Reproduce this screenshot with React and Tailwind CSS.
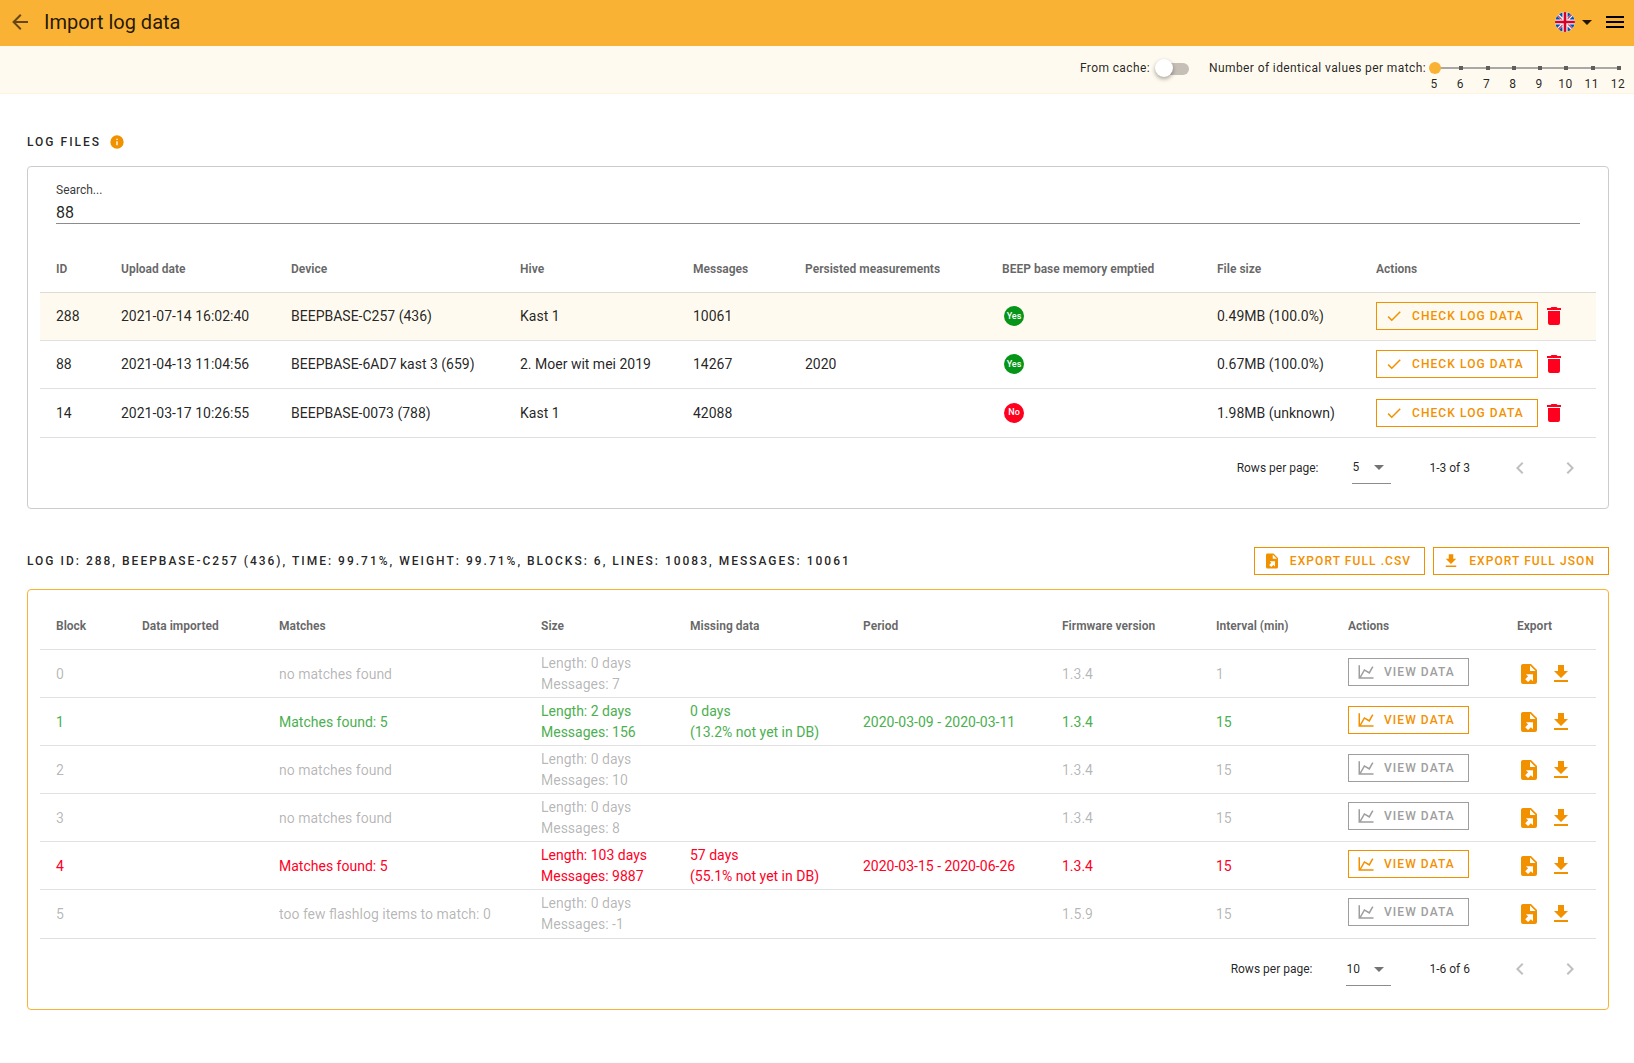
import { useState } from "react";

const icons = {
  back: "M20,11V13H8L13.5,18.5L12.08,19.92L4.16,12L12.08,4.08L13.5,5.5L8,11H20Z",
  menu: "M3,6H21V8H3V6M3,11H21V13H3V11M3,16H21V18H3V16Z",
  caret: "M7,10L12,15L17,10H7Z",
  info: "M13,9H11V7H13M13,17H11V11H13M12,2A10,10 0 0,0 2,12A10,10 0 0,0 12,22A10,10 0 0,0 22,12A10,10 0 0,0 12,2Z",
  check: "M21,7L9,19L3.5,13.5L4.91,12.09L9,16.17L19.59,5.59L21,7Z",
  trash: "M19,4H15.5L14.5,3H9.5L8.5,4H5V6H19M6,19A2,2 0 0,0 8,21H16A2,2 0 0,0 18,19V7H6V19Z",
  fileExport:
    "M6,2C4.89,2 4,2.9 4,4V20A2,2 0 0,0 6,22H18A2,2 0 0,0 20,20V8L14,2M13,3.5L18.5,9H13M8.93,12.22H16V19.29L13.88,17.17L11.05,20L8.22,17.17L11.05,14.35",
  download: "M5,20H19V18H5M19,9H15V3H9V9H5L12,16L19,9Z",
  chart: "M16,11.78L20.24,4.45L21.97,5.45L16.74,14.5L10.23,10.75L5.46,19H22V21H2V3H4V17.54L9.5,8L16,11.78Z",
  left: "M15.41,16.58L10.83,12L15.41,7.41L14,6L8,12L14,18L15.41,16.58Z",
  right: "M8.59,16.58L13.17,12L8.59,7.41L10,6L16,12L10,18L8.59,16.58Z",
};

const Icon = ({ name, className = "size-6" }) => (
  <svg viewBox="0 0 24 24" fill="currentColor" className={`shrink-0 ${className}`} aria-hidden="true">
    <path d={icons[name]} />
  </svg>
);

const Flag = () => (
  <svg viewBox="0 0 20 20" className="size-5" aria-hidden="true">
    <clipPath id="flag-circle">
      <circle cx="10" cy="10" r="10" />
    </clipPath>
    <g clipPath="url(#flag-circle)">
      <rect width="20" height="20" fill="#f0f0f0" />
      <path
        fill="#0052b4"
        d="M2.1 3.9A10 10 0 0 0 .4 7.4H5.6ZM19.6 7.4A10 10 0 0 0 17.9 3.9L14.4 7.4ZM.4 12.6A10 10 0 0 0 2.1 16.1L5.6 12.6ZM16.1 2.1A10 10 0 0 0 12.6.4V5.6ZM3.9 17.9A10 10 0 0 0 7.4 19.6V14.4ZM7.4.4A10 10 0 0 0 3.9 2.1L7.4 5.6ZM12.6 19.6A10 10 0 0 0 16.1 17.9L12.6 14.4ZM14.4 12.6L17.9 16.1A10 10 0 0 0 19.6 12.6Z"
      />
      <path
        fill="#d80027"
        d="M19.9 8.7H11.3V.1A10 10 0 0 0 8.7.1V8.7H.1A10 10 0 0 0 .1 11.3H8.7V19.9A10 10 0 0 0 11.3 19.9V11.3H19.9A10 10 0 0 0 19.9 8.7ZM12.6 12.6L17.1 17.1L17.7 16.4L13.8 12.6ZM7.4 12.6L2.9 17.1L3.6 17.7L7.4 13.8ZM7.4 7.4L2.9 2.9L2.3 3.6L6.2 7.4ZM12.6 7.4L17.1 2.9L16.4 2.3L12.6 6.2Z"
      />
    </g>
  </svg>
);

const OutlineButton = ({ icon, children, disabled }) => (
  <button
    disabled={disabled}
    className={`inline-flex h-7 items-center gap-[9px] whitespace-nowrap border pl-2 pr-[13px] text-xs font-medium uppercase tracking-[0.09em] ${
      disabled ? "border-[#9e9e9e] text-[#9e9e9e]" : "border-[#f29100] text-[#f29100]"
    }`}
  >
    <Icon name={icon} className="size-[18px]" />
    {children}
  </button>
);

const Pagination = ({ id, size, range }) => (
  <div className="flex h-[60px] items-center justify-end pr-2 text-xs">
    <label htmlFor={id}>Rows per page:</label>
    <div className="relative ml-[34px] mr-[38px] flex h-[33px] items-center border-b border-[#8c8c8c]">
      <select
        id={id}
        defaultValue={size}
        className={`h-8 appearance-none bg-transparent outline-none ${size > 5 ? "w-[45px]" : "w-[39px]"}`}
      >
        <option>{size}</option>
      </select>
      <Icon name="caret" className="pointer-events-none absolute right-0 size-6 text-black/55" />
    </div>
    <span>{range}</span>
    <button aria-label="Previous page" disabled className="ml-8 flex size-9 items-center justify-center text-black/25">
      <Icon name="left" />
    </button>
    <button aria-label="Next page" disabled className="ml-3.5 flex size-9 items-center justify-center text-black/25">
      <Icon name="right" />
    </button>
  </div>
);

const logFiles = [
  { id: 288, date: "2021-07-14 16:02:40", device: "BEEPBASE-C257 (436)", hive: "Kast 1", messages: 10061, persisted: "", emptied: true, size: "0.49MB (100.0%)" },
  { id: 88, date: "2021-04-13 11:04:56", device: "BEEPBASE-6AD7 kast 3 (659)", hive: "2. Moer wit mei 2019", messages: 14267, persisted: "2020", emptied: true, size: "0.67MB (100.0%)" },
  { id: 14, date: "2021-03-17 10:26:55", device: "BEEPBASE-0073 (788)", hive: "Kast 1", messages: 42088, persisted: "", emptied: false, size: "1.98MB (unknown)" },
];

const fileColumns = [
  ["ID", "w-[65px]"],
  ["Upload date", "w-[170px]"],
  ["Device", "w-[229px]"],
  ["Hive", "w-[173px]"],
  ["Messages", "w-[112px]"],
  ["Persisted measurements", "w-[197px]"],
  ["BEEP base memory emptied", "w-[215px]"],
  ["File size", "w-[159px]"],
  ["Actions", "w-[236px]"],
];

const blocks = [
  { block: 0, matches: "no matches found", days: 0, messages: 7, firmware: "1.3.4", interval: 1 },
  { block: 1, matches: "Matches found: 5", days: 2, messages: 156, missing: 0, missingPerc: "13.2%", period: "2020-03-09 - 2020-03-11", firmware: "1.3.4", interval: 15, color: "text-[#4caf50]" },
  { block: 2, matches: "no matches found", days: 0, messages: 10, firmware: "1.3.4", interval: 15 },
  { block: 3, matches: "no matches found", days: 0, messages: 8, firmware: "1.3.4", interval: 15 },
  { block: 4, matches: "Matches found: 5", days: 103, messages: 9887, missing: 57, missingPerc: "55.1%", period: "2020-03-15 - 2020-06-26", firmware: "1.3.4", interval: 15, color: "text-[#ff001f]" },
  { block: 5, matches: "too few flashlog items to match: 0", days: 0, messages: -1, firmware: "1.5.9", interval: 15 },
];

const blockColumns = [
  ["Block", "w-[86px]"],
  ["Data imported", "w-[137px]"],
  ["Matches", "w-[262px]"],
  ["Size", "w-[149px]"],
  ["Missing data", "w-[173px]"],
  ["Period", "w-[199px]"],
  ["Firmware version", "w-[154px]"],
  ["Interval (min)", "w-[132px]"],
  ["Actions", "w-[169px]"],
  ["Export", "w-[95px]"],
];

const TableHead = ({ columns }) => (
  <thead>
    <tr className="h-12 border-b border-black/12">
      {columns.map(([label, width]) => (
        <th key={label} className={`whitespace-nowrap px-4 pt-0.5 text-left text-xs font-bold text-black/60 ${width}`}>
          {label}
        </th>
      ))}
    </tr>
  </thead>
);

const matchValues = [5, 6, 7, 8, 9, 10, 11, 12];

export default function App() {
  const [search, setSearch] = useState("88");
  const [matchCount, setMatchCount] = useState(5);

  return (
    <div className="min-h-screen bg-white font-[Roboto,sans-serif] text-black/87">
      {/* Top bar */}
      <header className="flex h-[46px] items-center justify-between bg-[#f9b233] pb-0.5 pl-2 pr-[7px]">
        <div className="flex items-center gap-3">
          <button aria-label="Back" className="text-black/60">
            <Icon name="back" />
          </button>
          <h1 className="text-xl">Import log data</h1>
        </div>
        <div className="flex items-center gap-1">
          <button aria-label="Language" className="flex items-center">
            <Flag />
            <Icon name="caret" />
          </button>
          <button aria-label="Menu" className="text-black">
            <Icon name="menu" />
          </button>
        </div>
      </header>

      {/* Filter bar */}
      <div className="flex h-12 justify-end border-b border-[#fff3e0] bg-[#fffaef] pr-2 pt-3 text-xs tracking-[0.033em]">
        <label htmlFor="cache" className="mt-0.5">
          From cache:
        </label>
        <input
          id="cache"
          type="checkbox"
          className="relative ml-[11px] mt-[5px] h-3 w-7 appearance-none rounded-full bg-[#c5bfb7] before:absolute before:-left-1.5 before:-top-1 before:size-[18px] before:rounded-full before:bg-white before:shadow-[0_2px_4px_rgba(0,0,0,0.35)]"
        />
        <label htmlFor="matches" className="ml-5 mt-0.5">
          Number of identical values per match:
        </label>
        <div className="w-[200px]">
          <div className="relative flex h-5 items-center">
            <div className="absolute left-[7px] right-[5px] h-0.5 bg-[#a9a8a4]" />
            <div className="absolute left-[7px] right-[5px] flex justify-between">
              {matchValues.map((value) => (
                <span key={value} className="size-1 bg-[#5f5e5b]" />
              ))}
            </div>
            <input
              id="matches"
              type="range"
              min="5"
              max="12"
              value={matchCount}
              onChange={(e) => setMatchCount(Number(e.target.value))}
              className="relative ml-[3px] h-3 w-full appearance-none bg-transparent [&::-webkit-slider-thumb]:size-3 [&::-webkit-slider-thumb]:appearance-none [&::-webkit-slider-thumb]:rounded-full [&::-webkit-slider-thumb]:bg-[#f9b233]"
            />
          </div>
          <div className="flex justify-between leading-3">
            {matchValues.map((value) => (
              <span key={value} className="w-4 text-center">
                {value}
              </span>
            ))}
          </div>
        </div>
      </div>

      <main className="pl-[27px] pr-[25px] pt-10">
        <h2 className="flex h-4 items-center gap-2 text-xs font-medium uppercase tracking-[2px]">
          Log files
          <Icon name="info" className="size-4 text-[#f29100]" />
        </h2>

        <section className="mt-4 rounded border border-[#cccccc] px-3 pb-2.5">
          <div className="mx-4 border-b border-[#8c8c8c] pt-[15px]">
            <label htmlFor="search" className="block text-xs leading-4 text-black/80">
              Search...
            </label>
            <input
              id="search"
              value={search}
              onChange={(e) => setSearch(e.target.value)}
              className="block h-[25px] w-full bg-transparent pt-[3px] text-base outline-none"
            />
          </div>

          <table className="mt-5 w-full table-fixed text-sm">
            <TableHead columns={fileColumns} />
            <tbody>
              {logFiles.map((file) => (
                <tr key={file.id} className={`h-12 border-b border-black/12 last:h-[49px] ${file.id === 288 ? "bg-[#fffaef]" : ""}`}>
                  <td className="px-4">{file.id}</td>
                  <td className="px-4">{file.date}</td>
                  <td className="px-4">{file.device}</td>
                  <td className="px-4">{file.hive}</td>
                  <td className="px-4">{file.messages}</td>
                  <td className="px-4">{file.persisted}</td>
                  <td className="px-[18px]">
                    <span
                      className={`flex size-5 items-center justify-center rounded-full text-[9px] font-medium text-white ${
                        file.emptied ? "bg-[#069518]" : "bg-[#ff001f]"
                      }`}
                    >
                      {file.emptied ? "Yes" : "No"}
                    </span>
                  </td>
                  <td className="px-4">{file.size}</td>
                  <td className="px-4">
                    <div className="flex items-center gap-1">
                      <OutlineButton icon="check">Check log data</OutlineButton>
                      <button aria-label={`Delete log file ${file.id}`} className="text-[#ff001f]">
                        <Icon name="trash" />
                      </button>
                    </div>
                  </td>
                </tr>
              ))}
            </tbody>
          </table>
          <Pagination id="file-rows" size={5} range="1-3 of 3" />
        </section>

        <div className="mt-[38px] flex items-center justify-between">
          <h2 className="text-xs font-medium uppercase tracking-[2px]">
            Log ID: 288, BEEPBASE-C257 (436), time: 99.71%, weight: 99.71%, blocks: 6, lines: 10083, messages: 10061
          </h2>
          <div className="flex gap-2">
            <OutlineButton icon="fileExport">Export full .csv</OutlineButton>
            <OutlineButton icon="download">Export full json</OutlineButton>
          </div>
        </div>

        <section className="mt-3.5 rounded border border-[#f9b233] px-3 pb-2.5 pt-3">
          <table className="w-full table-fixed text-sm">
            <TableHead columns={blockColumns} />
            <tbody>
              {blocks.map((row) => (
                <tr key={row.block} className={`h-12 border-b border-black/12 last:h-[49px] ${row.color || "text-black/30"}`}>
                  <td className="px-4">{row.block}</td>
                  <td className="px-4"></td>
                  <td className="whitespace-nowrap px-4">{row.matches}</td>
                  <td className="whitespace-nowrap px-4 leading-[21px]">
                    Length: {row.days} days
                    <br />
                    Messages: {row.messages}
                  </td>
                  <td className="whitespace-nowrap px-4 leading-[21px]">
                    {row.missingPerc && (
                      <>
                        {row.missing} days
                        <br />({row.missingPerc} not yet in DB)
                      </>
                    )}
                  </td>
                  <td className="whitespace-nowrap px-4">{row.period}</td>
                  <td className="px-4">{row.firmware}</td>
                  <td className="px-4">{row.interval}</td>
                  <td className="px-4">
                    <div className="flex pb-1">
                      <OutlineButton icon="chart" disabled={!row.color}>
                        View data
                      </OutlineButton>
                    </div>
                  </td>
                  <td className="px-4">
                    <div className="flex gap-2 text-[#f29100]">
                      <button aria-label={`Export block ${row.block} as CSV`}>
                        <Icon name="fileExport" />
                      </button>
                      <button aria-label={`Export block ${row.block} as JSON`}>
                        <Icon name="download" />
                      </button>
                    </div>
                  </td>
                </tr>
              ))}
            </tbody>
          </table>
          <Pagination id="block-rows" size={10} range="1-6 of 6" />
        </section>
      </main>
    </div>
  );
}
